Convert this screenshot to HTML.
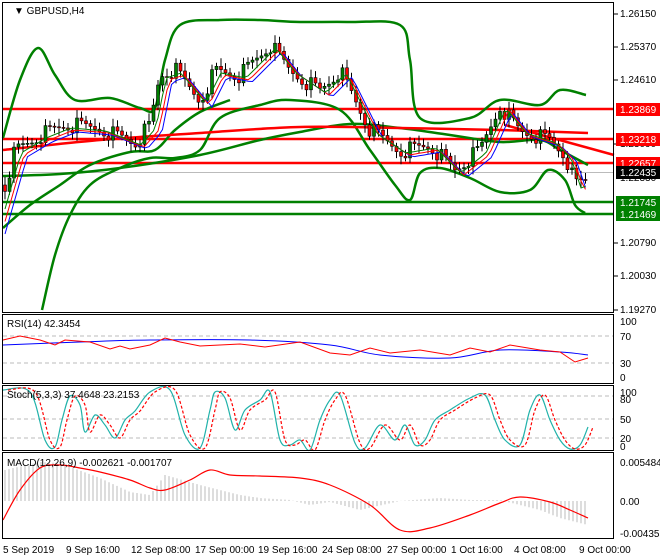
<!DOCTYPE html>
<html><head><meta charset="utf-8"><style>
html,body{margin:0;padding:0;background:#fff;width:660px;height:560px;overflow:hidden}
svg{display:block;font-family:"Liberation Sans",sans-serif;font-size:10px}
</style></head><body>
<svg id="s" width="660" height="560" xmlns="http://www.w3.org/2000/svg">
<rect width="660" height="560" fill="#fff"/>
<g id="main"></g>
<rect x="2.5" y="2.5" width="611" height="310" fill="none" stroke="#000"/>
<rect x="2.5" y="314.5" width="611" height="69" fill="none" stroke="#000"/>
<rect x="2.5" y="385.5" width="611" height="65" fill="none" stroke="#000"/>
<rect x="2.5" y="452.5" width="611" height="86" fill="none" stroke="#000"/>
<g fill="#000">
<text x="14" y="14">▼ GBPUSD,H4</text>
<text x="7" y="327">RSI(14) 42.3454</text>
<text x="7" y="398">Stoch(5,3,3) 37.4648 23.2153</text>
<text x="7" y="466">MACD(12,26,9) -0.002621 -0.001707</text>
<text x="620" y="17">1.26150</text><text x="620" y="50">1.25370</text>
<text x="620" y="83">1.24610</text><text x="620" y="147">1.23090</text>
<text x="620" y="181">1.22330</text><text x="620" y="246">1.20790</text>
<text x="620" y="279">1.20030</text><text x="620" y="313">1.19270</text>
<text x="620" y="325">100</text><text x="620" y="340">70</text>
<text x="620" y="367">30</text><text x="620" y="381">0</text>
<text x="620" y="396">100</text><text x="620" y="403">80</text>
<text x="620" y="423">50</text><text x="620" y="442">20</text><text x="620" y="450">0</text>
<text x="620" y="466">0.005484</text><text x="620" y="505">0.00</text>
<text x="620" y="537">-0.004353</text>
<text x="3" y="553">5 Sep 2019</text><text x="66" y="553">9 Sep 16:00</text>
<text x="131" y="553">12 Sep 08:00</text><text x="195" y="553">17 Sep 00:00</text>
<text x="258" y="553">19 Sep 16:00</text><text x="322" y="553">24 Sep 08:00</text>
<text x="387" y="553">27 Sep 00:00</text><text x="451" y="553">1 Oct 16:00</text>
<text x="514" y="553">4 Oct 08:00</text><text x="579" y="553">9 Oct 00:00</text>
</g>
<g stroke="#000"><line x1="614" y1="14" x2="618" y2="14"/><line x1="614" y1="47" x2="618" y2="47"/><line x1="614" y1="80" x2="618" y2="80"/><line x1="614" y1="144" x2="618" y2="144"/><line x1="614" y1="243" x2="618" y2="243"/><line x1="614" y1="276" x2="618" y2="276"/><line x1="614" y1="310" x2="618" y2="310"/></g>
<g font-size="10">
<rect x="616" y="103" width="44" height="13" fill="#f00"/><text x="620" y="113" fill="#fff">1.23869</text>
<rect x="616" y="133" width="44" height="13" fill="#f00"/><text x="620" y="143" fill="#fff">1.23218</text>
<rect x="616" y="157" width="44" height="13" fill="#f00"/><text x="620" y="167" fill="#fff">1.22657</text>
<rect x="616" y="166" width="44" height="13" fill="#000"/><text x="620" y="176" fill="#fff">1.22435</text>
<rect x="616" y="196" width="44" height="13" fill="#008000"/><text x="620" y="206" fill="#fff">1.21745</text>
<rect x="616" y="208" width="44" height="13" fill="#008000"/><text x="620" y="218" fill="#fff">1.21469</text>
</g>
</svg>
<script>
var NS="http://www.w3.org/2000/svg",g=document.getElementById('main');
function el(t,a){var e=document.createElementNS(NS,t);for(var k in a)e.setAttribute(k,a[k]);g.appendChild(e);return e;}
function pl(pts,c,w,d){var s=pts.map(function(p){return p.join(',')}).join(' ');var a={points:s,fill:'none',stroke:c,'stroke-width':w};if(d)a['stroke-dasharray']=d;el('polyline',a);}
function cr(k,c,w,d){var s='M'+k[0][0]+','+k[0][1];for(var i=0;i<k.length-1;i++){var p0=k[Math.max(0,i-1)],p1=k[i],p2=k[i+1],p3=k[Math.min(k.length-1,i+2)];
s+=' C'+(p1[0]+(p2[0]-p0[0])/6).toFixed(1)+','+(p1[1]+(p2[1]-p0[1])/6).toFixed(1)+' '+(p2[0]-(p3[0]-p1[0])/6).toFixed(1)+','+(p2[1]-(p3[1]-p1[1])/6).toFixed(1)+' '+p2[0]+','+p2[1];}
var a={d:s,fill:'none',stroke:c,'stroke-width':w};if(d)a['stroke-dasharray']=d;el('path',a);}
function interp(k,x){for(var i=0;i<k.length-1;i++){if(x<=k[i+1][0]){var t=(x-k[i][0])/(k[i+1][0]-k[i][0]);return k[i][1]+t*(k[i+1][1]-k[i][1]);}}return k[k.length-1][1];}
[336,363].forEach(function(y){el('line',{x1:3,x2:613,y1:y,y2:y,stroke:'#bbb','stroke-dasharray':'4,3'})});
[396,419,438].forEach(function(y){el('line',{x1:3,x2:613,y1:y,y2:y,stroke:'#bbb','stroke-dasharray':'4,3'})});
el('line',{x1:3,x2:613,y1:172.5,y2:172.5,stroke:'#bbb'});
[[109,'#f00'],[139,'#f00'],[163,'#f00'],[202,'#008000'],[214,'#008000']].forEach(function(l){el('line',{x1:3,x2:613,y1:l[0],y2:l[0],stroke:l[1],'stroke-width':2.5})});
var up=[[3,138],[20,80],[38,48],[55,75],[75,100],[110,98],[140,108],[155,108],[165,60],[180,25],[220,20],[260,20],[300,22],[350,22],[400,25],[410,60],[420,118],[470,118],[500,100],[540,105],[560,90],[586,95]];
var lo=[[42,310],[55,255],[70,215],[90,185],[120,168],[150,158],[175,158],[200,150],[220,118],[260,105],[290,100],[340,110],[370,150],[395,185],[410,200],[420,173],[440,168],[470,178],[500,192],[530,190],[548,170],[565,180],[575,205],[585,213]];
var lo2=[[3,228],[30,205],[60,185],[90,165],[130,152],[155,150],[175,130],[200,112],[230,100]];
var mid=[[3,176],[60,174],[120,168],[200,155],[260,140],[300,132],[350,124],[400,128],[450,135],[500,142],[540,140],[560,150],[588,165]];
cr(up,'#008000',2.5);cr(lo,'#008000',2.5);cr(lo2,'#008000',2.5);cr(mid,'#008000',2.5);
cr([[3,150],[100,140],[200,133],[300,127],[400,128],[500,130],[588,133]],'#f00',2.5);
el('line',{x1:505,y1:125,x2:614,y2:155,stroke:'#f00','stroke-width':2.5});
var pr=[[5,185],[15,150],[40,135],[65,125],[100,128],[135,142],[150,125],[160,75],[175,70],[200,100],[215,70],[240,75],[270,45],[290,70],[320,90],[340,70],[350,90],[370,130],[400,150],[430,145],[455,170],[480,150],[500,105],[520,130],[550,140],[565,155],[575,185],[588,180]];
var ma1=[],ma2=[],ma3=[],prev=interp(pr,5);
for(var x=5;x<=588;x+=4.5){var c=interp(pr,x)+((x*37)%11-5)*1.6;var o=prev;var h=Math.min(o,c)-3-((x*13)%6),l=Math.max(o,c)+3+((x*7)%6);
el('line',{x1:x,x2:x,y1:h,y2:l,stroke:'#000'});
el('rect',{x:x-1.5,y:Math.min(o,c),width:3,height:Math.max(1,Math.abs(c-o)),fill:c<o?'#008000':'#f00',stroke:'#000','stroke-width':0.6});
ma1.push([x,(interp(pr,x-6)+3).toFixed(1)]);ma2.push([x,(interp(pr,x-9)+5).toFixed(1)]);ma3.push([x,(interp(pr,x-12)+7).toFixed(1)]);prev=c;}
pl(ma3,'#00f',1);pl(ma2,'#f00',1);pl(ma1,'#008000',1);
cr([[3,345],[80,342],[150,340],[250,340],[330,345],[380,355],[450,358],[500,350],[560,352],[588,355]],'#00f',1);
pl([[3,340],[20,336],[40,340],[55,345],[65,340],[90,342],[110,349],[120,346],[130,349],[150,345],[165,338],[180,342],[200,346],[240,344],[265,347],[300,342],[330,353],[350,355],[370,348],[390,353],[420,350],[450,355],[470,348],[490,352],[510,345],[540,350],[560,352],[575,362],[588,358]],'#f00',1);
var st=[[3,390],[30,392],[45,440],[55,447],[62,420],[70,396],[80,405],[85,432],[95,415],[105,425],[115,438],[125,420],[135,411],[150,392],[170,390],[185,435],[200,448],[210,410],[215,392],[225,398],[235,430],[245,410],[260,400],[270,392],[280,440],[290,445],[300,440],[310,450],[320,420],[330,400],[340,395],[355,443],[365,448],[380,425],[395,440],[405,425],[415,445],[425,440],[435,420],[450,410],[470,398],[485,395],[495,420],[505,440],[520,445],[530,410],[540,395],[550,420],[560,440],[570,449],[580,445],[588,427]];
cr(st,'#20b2aa',1.2);
cr(st.map(function(p){return [p[0]+5,p[1]]}),'#f00',1.2,'3,2');
for(var x=5;x<=588;x+=4){var v=interp([[5,470],[40,462],[60,463],[100,478],[130,492],[150,495],[165,475],[200,485],[240,495],[260,498],[290,500],[310,505],[330,502],[360,510],[400,501],[440,498],[470,500],[500,500],[540,510],[560,518],[588,525]],x);el('line',{x1:x,x2:x,y1:501,y2:v,stroke:'#bbb'});}
cr([[3,520],[20,490],[40,468],[60,465],[80,468],[100,472],[130,480],[150,488],[165,490],[190,480],[210,470],[230,475],[260,476],[300,478],[330,485],[370,505],[400,530],[430,528],[470,515],[500,503],[520,497],[550,502],[570,510],[588,518]],'#f00',1.2);
</script>
</body></html>
